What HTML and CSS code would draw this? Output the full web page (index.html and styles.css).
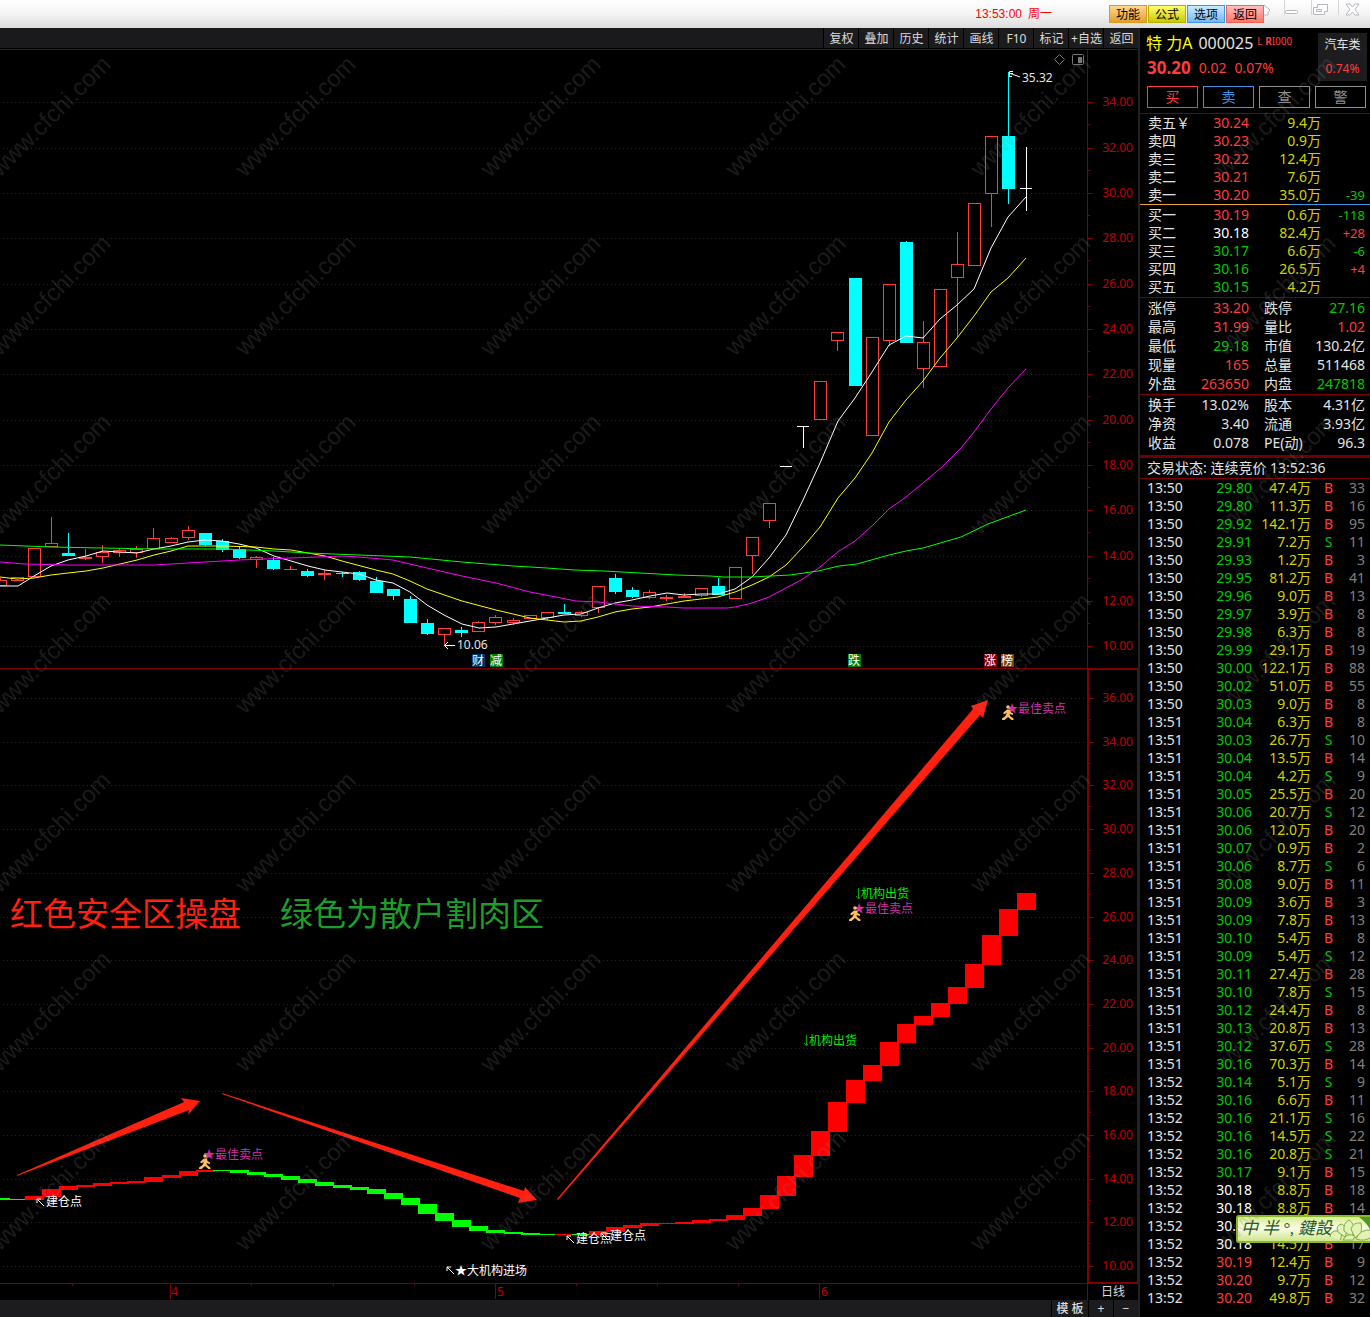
FILE: index.html
```html
<!DOCTYPE html>
<html lang="zh-CN">
<head>
<meta charset="utf-8">
<title>特力A 000025</title>
<link rel="stylesheet" href="styles.css">
</head>
<body>
<div class="app">
  <header class="titlebar">
    <div class="clock"><span>13:53:00</span><span>周一</span></div>
    <nav class="quick">
      <button class="quick-btn orange">功能</button>
      <button class="quick-btn yellow">公式</button>
      <button class="quick-btn blue">选项</button>
      <button class="quick-btn pink">返回</button>
    </nav>
    <svg class="window-icons" viewBox="0 0 106 28" aria-hidden="true">
      <g stroke="#d2d5d8" fill="none"><path d="M20.500 0V15M47.500 0V15M74.500 0V15"/></g>
      <g fill="#fff" stroke="#b4b8bc">
        <path d="M0 5L6 10L4 12V15H0"/>
        <rect x="21.500" y="10.500" width="12" height="3" rx="1"/>
        <path d="M53.500 4.500H63.500V11.500H60.500V14.500H49.500V7.500H53.500Z"/>
        <path d="M52.500 9.500H57.500V11.500H52.500Z"/>
        <path d="M82 4H86L88.500 7L91 4H95L91 9.500L95 15H91L88.500 12L86 15H82L86 9.500Z"/>
      </g>
    </svg>
  </header>

  <main class="chart-area">
    <nav class="toolbar">
      <button>复权</button><button>叠加</button><button>历史</button><button>统计</button><button>画线</button><button>F10</button><button>标记</button><button>+自选</button><button>返回</button>
    </nav>

    <svg class="plot" viewBox="0 50 1138 619" role="img" aria-label="日线K线图">
      <g id="kline-grid"></g>
      <path class="axis" d="M1087.500 50V669M0 668.500H1138"/>
      <g id="candles" shape-rendering="crispEdges"></g>
      <polyline class="ma white" points="0,586 18,586 34,576 51,566 68,560 86,556 103,551 137,553 154,549 171,546 188,542 205,540 222,541 239,544 256,548 274,556 308,566 325,570 359,574 376,580 393,583 410,592 427,605 444,615 462,624 479,628 496,627 530,621 564,615 581,614 598,608 615,603 632,600 650,596 667,593 684,595 701,594 718,594 735,589 752,577 769,558 786,535 803,500 820,463 838,421 855,398 872,372 889,345 906,336 923,338 940,319 957,305 974,289 991,248 1008,217 1026,197"/>
      <polyline class="ma yellow" points="0,577 17,579 34,578 51,575 68,573 86,571 103,568 120,564 137,560 154,555 171,551 188,546 222,546 256,547 274,549 291,550 308,553 325,556 342,561 376,570 393,574 410,581 427,589 462,601 496,610 530,618 547,620 564,622 581,621 598,617 615,612 632,609 650,607 667,604 684,601 701,599 718,597 735,592 752,585 769,577 786,565 803,547 820,527 838,498 855,478 872,453 889,422 906,400 923,381 940,358 957,338 974,316 991,292 1008,278 1026,258"/>
      <polyline class="ma magenta" points="0,562 25,564 68,565 154,565 205,562 239,560 291,558 342,556 359,557 393,560 427,568 462,576 496,583 530,592 576,601 598,602 615,604 632,606 667,607 684,608 727,608 735,607 752,603 769,597 786,588 803,579 820,567 839,551 855,541 872,526 889,509 906,497 923,483 942,467 961,448 974,432 991,409 1008,388 1026,369"/>
      <polyline class="ma green" points="0,545 51,547 154,549 222,549 274,551 308,553 359,555 410,557 462,562 513,566 547,568 574,570 604,571 676,575 710,576 724,577 752,577 790,575 818,571 839,566 857,564 889,555 906,551 923,548 961,537 988,524 1026,510"/>
      <g class="marker-line">
        <path d="M444 645.500H455M448 642L444.500 645.500L448 649"/>
        <path d="M1009 73L1020 77M1013 71.500H1009.500V77M1009 73.500H1013M1009.500 76.500H1012"/>
      </g>
      <g class="price-note"><text x="457" y="649">10.06</text><text x="1022" y="82">35.32</text></g>
      <g class="badges">
        <rect x="472" y="654" width="13" height="13" fill="#003366"/><text x="478" y="665">财</text>
        <rect x="490" y="654" width="13" height="13" fill="#008000"/><text x="496" y="665">减</text>
        <rect x="848" y="654" width="13" height="13" fill="#008000"/><text x="854" y="665">跌</text>
        <rect x="984" y="654" width="13" height="13" fill="#800000"/><text x="990" y="665">涨</text>
        <rect x="1001" y="654" width="13" height="13" fill="#804000"/><text x="1007" y="665">榜</text>
      </g>
      <g fill="none" stroke="#777"><path d="M1059.500 54.500L1064.500 59.500L1059.500 64.500L1054.500 59.500Z"/><rect x="1072.500" y="54.500" width="11" height="10" rx="1"/><path d="M1078 57H1082V63H1078Z" fill="#777" stroke="none"/></g>
    </svg>

    <svg class="plot" viewBox="0 669 1138 614" role="img" aria-label="操盘指标图">
      <defs>
        <g id="runner">
          <circle cx="6" cy="2" r="1.800"/>
          <path d="M5 4.500H8L8.500 7L11 8.500V10L7.500 9L8 11L11.500 13.500V15H9.500L6 12L2.500 15H0V13.500L3.500 11L5 7.500L3 9H1.500V7.500Z"/>
        </g>
      </defs>
      <g id="step-grid"></g>
      <path class="axis" d="M1088 669.500H1138M1088 1282.500H1138M1137.500 669V1283"/>
      <path class="axis-box" d="M1088 669V1283"/>
      <g id="steps" shape-rendering="crispEdges"></g>
      <g fill="#ff2010">
        <path d="M17 1175L184 1102L181 1098L200 1101L188 1115L189 1110L17 1176Z"/>
        <path d="M222 1093L524 1191L525 1187L537 1200L518 1203L520 1198L222 1094Z"/>
        <path d="M557 1199L973 709L971 706L988 700L983 718L980 715L558 1200Z"/>
      </g>
      <g class="headline"><text x="10" y="926" fill="#ff2010">红色安全区操盘</text><text x="280" y="926" fill="#1e9e28">绿色为散户割肉区</text></g>
      <g class="signal sell">
        <text x="203" y="1159">★最佳卖点</text><text x="853" y="913">★最佳卖点</text><text x="1006" y="713">★最佳卖点</text>
      </g>
      <g fill="#ffc060">
        <use href="#runner" x="199" y="1154"/><use href="#runner" x="849" y="906"/><use href="#runner" x="1002" y="705"/>
      </g>
      <g class="signal exit">
        <text x="861" y="898">机构出货</text><text x="809" y="1045">机构出货</text>
        <path d="M858.500 888V898M856 896L858.500 899L860 897M806.500 1035V1045M804 1043L806.500 1046L808 1044"/>
      </g>
      <g class="signal entry">
        <text x="46" y="1206">建仓点</text><text x="576" y="1243">建仓点</text><text x="610" y="1240">建仓点</text><text x="455" y="1275">★大机构进场</text>
        <path d="M44 1206L37 1199M37 1203V1199H41M574 1243L567 1236M567 1240V1236H571M608 1240L601 1233M601 1237V1233H605M454 1274L447 1267M447 1271V1267H451"/>
      </g>
    </svg>

    <div class="time-axis">
      <svg class="months" viewBox="0 1283 1087 17" role="img" aria-label="月份">
        <path class="axis" d="M0 1283.500H1087M170.500 1283V1299M495.500 1283V1299M819.500 1283V1299M72.500 1283V1286M251.500 1283V1286M333.500 1283V1286M414.500 1283V1286M576.500 1283V1286M657.500 1283V1286M738.500 1283V1286"/>
        <g class="axis-label"><text x="171" y="1296">4</text><text x="497" y="1296">5</text><text x="821" y="1296">6</text></g>
      </svg>
      <button class="period">日线</button>
    </div>
    <footer class="bottom-bar"><button class="template">模 板</button><button aria-label="放大">+</button><button aria-label="缩小">−</button></footer>
  </main>

  <aside class="quote">
    <section class="stock">
      <div class="stock-info">
        <div class="stock-name"><b>特 力A</b><span class="code">000025</span><small>L <strong>R</strong>I000</small></div>
        <div class="stock-price red"><strong>30.20</strong><span>0.02</span><span>0.07%</span></div>
      </div>
      <div class="industry"><span>汽车类</span><span class="red">0.74%</span></div>
    </section>
    <div class="orders">
      <button class="buy">买</button><button class="sell">卖</button><button>查</button><button>警</button>
    </div>
    <table class="book">
      <tbody>
        <tr><th>卖五￥</th><td class="red">30.24</td><td class="vol">9.4万</td><td></td></tr>
        <tr><th>卖四</th><td class="red">30.23</td><td class="vol">0.9万</td><td></td></tr>
        <tr><th>卖三</th><td class="red">30.22</td><td class="vol">12.4万</td><td></td></tr>
        <tr><th>卖二</th><td class="red">30.21</td><td class="vol">7.6万</td><td></td></tr>
        <tr><th>卖一</th><td class="red">30.20</td><td class="vol">35.0万</td><td class="delta green">-39</td></tr>
      </tbody>
    </table>
    <div class="spread"><span></span><span></span></div>
    <table class="book">
      <tbody>
        <tr><th>买一</th><td class="red">30.19</td><td class="vol">0.6万</td><td class="delta green">-118</td></tr>
        <tr><th>买二</th><td class="flat">30.18</td><td class="vol">82.4万</td><td class="delta red">+28</td></tr>
        <tr><th>买三</th><td class="green">30.17</td><td class="vol">6.6万</td><td class="delta green">-6</td></tr>
        <tr><th>买四</th><td class="green">30.16</td><td class="vol">26.5万</td><td class="delta red">+4</td></tr>
        <tr><th>买五</th><td class="green">30.15</td><td class="vol">4.2万</td><td></td></tr>
      </tbody>
    </table>
    <table class="stats">
      <tbody>
        <tr><th>涨停</th><td class="red">33.20</td><th>跌停</th><td class="green">27.16</td></tr>
        <tr><th>最高</th><td class="red">31.99</td><th>量比</th><td class="red">1.02</td></tr>
        <tr><th>最低</th><td class="green">29.18</td><th>市值</th><td>130.2亿</td></tr>
        <tr><th>现量</th><td class="red">165</td><th>总量</th><td>511468</td></tr>
        <tr><th>外盘</th><td class="red">263650</td><th>内盘</th><td class="green">247818</td></tr>
      </tbody>
    </table>
    <table class="stats">
      <tbody>
        <tr><th>换手</th><td>13.02%</td><th>股本</th><td>4.31亿</td></tr>
        <tr><th>净资</th><td>3.40</td><th>流通</th><td>3.93亿</td></tr>
        <tr><th>收益</th><td>0.078</td><th>PE(动)</th><td>96.3</td></tr>
      </tbody>
    </table>
    <p class="status">交易状态: 连续竞价 13:52:36</p>
    <div class="trades-wrap">
      <table class="trades"><tbody id="trades"></tbody></table>
      <div class="ime">
        <span>中</span><span>半</span><span>°,</span><span>鍵設</span>
        <svg viewBox="0 0 42 24" aria-hidden="true">
          <path d="M30 0H42V14Q38 6 30 0Z" fill="#4f9a1c"/>
          <g fill="#e4f2b4" stroke="#7fae4c">
            <path d="M1 20Q2 13 9 14Q15 16 11 23"/><path d="M9 15Q6 8 13 7Q20 12 16 20Z"/><path d="M15 14Q14 6 20 3Q28 8 23 20Z"/><path d="M22 12Q24 5 32 6Q35 16 26 21Z"/><path d="M14 23Q18 15 26 19L24 23Z"/><path d="M27 22Q31 12 42 13V20Q36 25 27 22Z"/>
          </g>
        </svg>
      </div>
    </div>
  </aside>

  <svg class="watermark" aria-hidden="true">
    <defs><pattern id="wm" x="230" y="50" width="245" height="179" patternUnits="userSpaceOnUse"><text transform="translate(15 128) rotate(-45)">www.cfchi.com</text></pattern></defs>
    <rect width="100%" height="98%" fill="url(#wm)"/>
  </svg>
</div>
<script src="charts.js"></script>
</body>
</html>
```
FILE: styles.css
```css
* { box-sizing: border-box; }
body {
  margin: 0;
  background: #000;
  color: #e4e4e4;
  font: 14px/18px "Noto Sans", "Noto Sans CJK SC", sans-serif;
}
button {
  margin: 0;
  padding: 0;
  border: 0;
  background: #1c1c1f;
  color: #ddd;
  font: 12px/18px "Noto Sans", "Noto Sans CJK SC", sans-serif;
  white-space: nowrap;
}
.app {
  position: relative;
  display: grid;
  grid-template-columns: minmax(0, 1fr) 232px;
}
.red { color: #ff3c3c; }
.green { color: #00c800; }
.flat { color: #fff; }

/* title bar */
.titlebar {
  grid-column: 1 / -1;
  display: flex;
  justify-content: flex-end;
  height: 28px;
  background: linear-gradient(#fff, #f4f4f4 50%, #dcdcdc);
}
.clock {
  display: flex;
  gap: 6px;
  margin-right: 57px;
  color: #f00;
  font: 12px/28px "Liberation Sans", "Noto Sans CJK SC", sans-serif;
}
.quick { display: flex; gap: 1px; padding-top: 5px; }
.quick-btn {
  width: 38px;
  height: 18px;
  padding-top: 1px;
  border: 1px solid;
  color: #000;
  line-height: 16px;
}
.quick-btn.orange { border-color: #e09a20; background: linear-gradient(#ffd890, #e0a030); }
.quick-btn.yellow { border-color: #b4b400; background: linear-gradient(#ffff70, #c8c800); }
.quick-btn.blue { border-color: #3c96f0; background: linear-gradient(#c8ecff, #78b8f0); }
.quick-btn.pink { border-color: #f06450; background: linear-gradient(#ffc0c0, #ff7468); }
.window-icons { width: 106px; height: 28px; }

/* charts */
.chart-area { min-width: 0; }
.toolbar {
  display: flex;
  justify-content: flex-end;
  gap: 1px;
  height: 22px;
  padding-bottom: 2px;
  background: linear-gradient(#1a1a1d 20px, #000 20px, #000 21px, #222 21px);
}
.toolbar button { width: 34px; padding: 1px 0 0 1px; box-shadow: -1px 0 #000; line-height: 20px; }
.plot, .months { display: block; width: 100%; height: auto; }
.plot text, .months text { font-family: "Noto Sans", "Noto Sans CJK SC", sans-serif; }
.grid-line { stroke: #800000; stroke-dasharray: 1 3; }
.axis, .tick { stroke: #800000; fill: none; }
.axis-box { stroke: #800000; stroke-width: 2; fill: none; }
.axis-label { fill: #c00000; font-size: 12px; }
.axis-label.prices { text-anchor: end; }
.ma { fill: none; stroke-width: 1; }
.ma.white { stroke: #fff; }
.ma.yellow { stroke: #ff0; }
.ma.magenta { stroke: #f0f; }
.ma.green { stroke: #0f0; }
.marker-line { fill: none; stroke: #fff; }
.price-note { fill: #e4e4e4; font-size: 12px; }
.badges text { fill: #fff; font-size: 12px; text-anchor: middle; }
.headline { font-size: 33px; }
.signal { font-size: 12px; }
.signal path { fill: none; stroke: currentColor; }
.signal.sell { fill: #d030a8; }
.signal.exit { fill: #0e0; color: #0a0; }
.signal.entry { fill: #fff; color: #fff; }

.time-axis { display: flex; align-items: flex-start; }
.months { flex: 1; min-width: 0; }
.period {
  width: 51px;
  height: 17px;
  border-top: 1px solid #800000;
  border-left: 1px solid #800000;
  background: #000;
  line-height: 16px;
}
.bottom-bar {
  display: flex;
  justify-content: flex-end;
  gap: 1px;
  height: 17px;
  background: #1c1c1f;
}
.bottom-bar button { width: 24px; box-shadow: -1px 0 #000; line-height: 17px; }
.bottom-bar .template { width: 36px; font-weight: 500; }

/* quote panel */
.quote { border-left: 2px solid #222; }
.stock { display: flex; justify-content: space-between; height: 58px; padding: 5px 3px 0 6px; }
.stock-name { display: flex; gap: 6px; line-height: 20px; white-space: nowrap; }
.stock-name b { color: #ff0; font-size: 16px; font-weight: 400; }
.stock-name .code { font-size: 16px; }
.stock-name small { color: #ff3c3c; font-size: 10px; line-height: 16px; margin-left: -2px; }
.stock-price { display: flex; gap: 8px; padding-left: 1px; line-height: 29px; }
.stock-price strong { font-size: 17px; }
.industry {
  display: flex;
  flex-direction: column;
  width: 49px;
  height: 48px;
  background: #1d1d20;
  font-size: 12px;
  line-height: 24px;
  text-align: center;
}
.orders {
  display: grid;
  grid-template-columns: repeat(4, 1fr);
  gap: 5px;
  padding: 0 4px 5px 7px;
  border-bottom: 1px solid #800000;
}
.orders button {
  height: 22px;
  border: 1px solid;
  background: #000;
  color: #909090;
  font-size: 14px;
  line-height: 20px;
}
.orders .buy { color: #ff3c3c; }
.orders .sell { color: #3c96e6; }

table { width: 100%; table-layout: fixed; border-collapse: collapse; }
th, td { padding: 0; white-space: nowrap; text-align: right; }
th { font-weight: 400; text-align: left; }
.book { line-height: 18px; }
.book tr { height: 18px; }
.book th { width: 50px; padding-left: 8px; }
.book td:nth-child(2) { width: 59px; }
.book td:nth-child(3) { width: 72px; }
.book td:nth-child(4) { padding-right: 5px; }
.vol { color: #d2d200; }
.delta { font-size: 13px; }
.spread { display: grid; grid-template-columns: 150px 1fr; height: 1px; margin-bottom: 1px; }
.spread span:first-child { background: #f0a030; }
.spread span:last-child { background: #3c96e6; }
.stats { margin-top: 1px; border-top: 1px solid #800000; line-height: 19px; }
.stats tr { height: 19px; }
.stats th:first-child { width: 50px; padding-left: 8px; }
.stats td:nth-child(2) { width: 59px; }
.stats th:nth-child(3) { width: 61px; padding-left: 15px; }
.stats td:last-child { padding-right: 5px; }
.status {
  margin: 3px 0 0;
  padding-left: 7px;
  border-top: 3px solid #700000;
  border-bottom: 1px solid #800000;
  line-height: 20px;
}
.trades-wrap { position: relative; }
.trades tr { height: 18px; }
.trades th { width: 52px; padding-left: 7px; }
.trades td:nth-child(2) { width: 60px; }
.trades td:nth-child(3) { width: 59px; }
.trades td:nth-child(4) { width: 35px; text-align: center; }
.trades td:nth-child(5) { padding-right: 5px; color: #808080; }
.ime {
  position: absolute;
  right: 0;
  bottom: 64px;
  display: flex;
  gap: 4px;
  width: 134px;
  height: 28px;
  padding-left: 3px;
  overflow: hidden;
  border: 2px solid #8cb82c;
  border-right: 0;
  border-radius: 3px 0 0 3px;
  background: linear-gradient(#d6ec8c, #fbfde8 45%, #cfe68a);
  color: #24562a;
  font: italic 17px/24px "Liberation Serif", "Noto Sans CJK TC", serif;
  white-space: nowrap;
}
.ime svg { flex: none; width: 42px; height: 24px; margin-left: -7px; }

.watermark {
  position: absolute;
  inset: 0;
  width: 100%;
  height: 100%;
  pointer-events: none;
}
.watermark text { fill: rgba(128, 128, 128, .2); font: 24px "Liberation Sans", sans-serif; }
```
FILE: charts.js
```js
const NS = "http://www.w3.org/2000/svg";
const STEP = 17.1;

function add(parent, name, attrs, text) {
  const node = document.createElementNS(NS, name);
  for (const key in attrs) node.setAttribute(key, attrs[key]);
  if (text) node.textContent = text;
  parent.appendChild(node);
}

/* Dotted price lines, axis ticks and price labels, every 2.00 */
function drawGrid(id, max, y0, gap, tickX) {
  const g = document.getElementById(id);
  const labels = document.createElementNS(NS, "g");
  labels.setAttribute("class", "axis-label prices");
  for (let price = max, n = 0; price >= 10; price -= 2, n++) {
    const y = Math.round(y0 + n * gap);
    add(g, "path", { class: "grid-line", d: `M3 ${y + .5}H1085` });
    add(g, "path", { class: "tick", d: `M${tickX} ${y + .5}h5` });
    if (price > 10) add(g, "path", { class: "tick", d: `M${tickX} ${Math.floor(y + gap / 2) + .5}h2` });
    add(labels, "text", { x: 1133, y: y + 4 }, price.toFixed(2));
  }
  g.appendChild(labels);
}
drawGrid("kline-grid", 34, 102.3, 45.33, 1088);
drawGrid("step-grid", 36, 698, 43.7, 1089);

/* kind (r up, c down, w unchanged), body top, body bottom, high, low */
const candles = `r 580 586 578 586|r 577 581 577 581|r 548 577 548 577|r 543 547 517 547|c 553 556 533 556|r 557 559 549 560|r 552 557 545 563|r 550 553 548 557|r 549 553 546 558|r 538 549 528 549|r 538 543 537 543|r 530 538 526 540|c 533 545 533 546|c 541 550 539 552|c 549 558 546 559|r 557 560 556 568|c 560 569 557 570|r 569 570 566 570|c 571 576 569 577|r 573 575 570 580|c 573 574 572 577|c 572 580 571 581|c 581 593 577 593|c 589 596 589 600|c 599 623 596 623|c 623 634 619 635|r 628 635 628 645|c 630 633 627 637|r 622 632 621 632|r 617 623 615 625|r 620 623 618 625|r 615 619 615 619|r 612 618 612 620|c 612 614 604 614|r 612 616 611 617|r 586 608 586 613|c 578 592 574 594|c 590 597 587 598|r 592 598 590 599|r 597 599 595 601|r 596 598 593 598|r 588 596 588 597|c 586 595 578 595|r 567 599 567 599|r 537 556 537 574|r 503 521 503 528|w 466 466 466 466|w 426 426 426 448|r 381 420 381 420|r 332 341 332 351|c 278 386 278 386|r 337 436 337 436|r 284 341 284 346|c 242 343 241 343|r 342 369 321 388|r 289 367 289 367|r 264 278 232 337|r 203 266 203 266|r 136 194 136 227|c 136 189 72 204|w 188 188 147 211`;
const layer = document.getElementById("candles");
const colors = { r: "#ff3c3c", c: "#00ffff", w: "#ffffff" };
candles.split("|").forEach((row, i) => {
  const [kind, ...v] = row.split(" ");
  const [top, bottom, high, low] = v.map(Number);
  const x = Math.floor(i * STEP);
  const color = colors[kind];
  if (high < top) add(layer, "rect", { x, y: high, width: 1, height: top - high, fill: color });
  if (low > bottom) add(layer, "rect", { x, y: bottom, width: 1, height: low - bottom, fill: color });
  if (kind === "r" && bottom - top > 2) {
    add(layer, "rect", { x: x - 5.5, y: top + .5, width: 12, height: bottom - top - 1, fill: "none", stroke: color });
  } else {
    add(layer, "rect", { x: x - 6, y: top, width: kind === "w" ? 12 : 13, height: Math.max(1, bottom - top), fill: color });
  }
});

/* colour, top, bottom of each indicator step */
const steps = "g 1198 1200|g 1199 1200|r 1196 1200|r 1189 1197|r 1186 1190|r 1185 1187|r 1183 1186|r 1182 1184|r 1181 1183|r 1177 1182|r 1175 1178|r 1171 1176|r 1170 1172|g 1170 1171|g 1170 1173|g 1172 1175|g 1174 1177|g 1176 1180|g 1179 1183|g 1182 1186|g 1185 1188|g 1187 1190|g 1189 1194|g 1193 1199|g 1198 1205|g 1204 1214|g 1213 1221|g 1220 1227|g 1226 1231|g 1230 1233|g 1232 1234|g 1233 1235|g 1234 1235|r 1234 1235|g 1234 1235|r 1231 1235|r 1227 1232|r 1225 1228|r 1223 1226|r 1223 1224|r 1222 1224|r 1220 1223|r 1219 1221|r 1215 1220|r 1208 1216|r 1195 1209|r 1176 1196|r 1155 1177|r 1131 1156|r 1102 1132|r 1080 1103|r 1065 1081|r 1042 1066|r 1024 1043|r 1016 1025|r 1003 1017|r 987 1004|r 964 988|r 935 965|r 909 936|r 893 910";
const stepLayer = document.getElementById("steps");
steps.split("|").forEach((row, i) => {
  const [c, top, bottom] = row.split(" ");
  add(stepLayer, "rect", { x: Math.floor(i * STEP) - 9, y: top, width: 19, height: bottom - top, fill: c === "r" ? "#ff0000" : "#00ff00" });
});

/* minute, price, volume, side, count */
const trades = `50 29.80 47.4 B 33|50 29.80 11.3 B 16|50 29.92 142.1 B 95|50 29.91 7.2 S 11|50 29.93 1.2 B 3|50 29.95 81.2 B 41|50 29.96 9.0 B 13|50 29.97 3.9 B 8|50 29.98 6.3 B 8|50 29.99 29.1 B 19|50 30.00 122.1 B 88|50 30.02 51.0 B 55|50 30.03 9.0 B 8|51 30.04 6.3 B 8|51 30.03 26.7 S 10|51 30.04 13.5 B 14|51 30.04 4.2 S 9|51 30.05 25.5 B 20|51 30.06 20.7 S 12|51 30.06 12.0 B 20|51 30.07 0.9 B 2|51 30.06 8.7 S 6|51 30.08 9.0 B 11|51 30.09 3.6 B 3|51 30.09 7.8 B 13|51 30.10 5.4 B 8|51 30.09 5.4 S 12|51 30.11 27.4 B 28|51 30.10 7.8 S 15|51 30.12 24.4 B 8|51 30.13 20.8 B 13|51 30.12 37.6 S 28|51 30.16 70.3 B 14|52 30.14 5.1 S 9|52 30.16 6.6 B 11|52 30.16 21.1 S 16|52 30.16 14.5 S 22|52 30.16 20.8 S 21|52 30.17 9.1 B 15|52 30.18 8.8 B 18|52 30.18 8.8 B 14|52 30.18 6.0 B 10|52 30.18 14.5 B 17|52 30.19 12.4 B 9|52 30.20 9.7 B 12|52 30.20 49.8 B 32`;
document.getElementById("trades").innerHTML = trades.split("|").map(row => {
  const [minute, price, volume, side, count] = row.split(" ");
  const tone = price < "30.18" ? "green" : price > "30.18" ? "red" : "flat";
  return `<tr><th>13:${minute}</th><td class="${tone}">${price}</td><td class="vol">${volume}万</td><td class="${side === "B" ? "red" : "green"}">${side}</td><td>${count}</td></tr>`;
}).join("");
```
